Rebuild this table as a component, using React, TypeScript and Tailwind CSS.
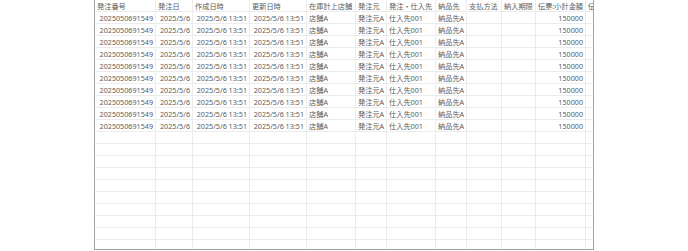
const columns = [
  { label: "発注番号", width: "w-[61px]", align: "right", value: "2025050691549" },
  { label: "発注日", width: "w-[37px]", align: "right", value: "2025/5/6" },
  { label: "作成日時", width: "w-[57px]", align: "right", value: "2025/5/6 13:51" },
  { label: "更新日時", width: "w-[57px]", align: "right", value: "2025/5/6 13:51" },
  { label: "在庫計上店舗", width: "w-[49px]", align: "left", value: "店舗A" },
  { label: "発注元", width: "w-[31px]", align: "left", value: "発注元A" },
  { label: "発注・仕入先", width: "w-[49px]", align: "left", value: "仕入先001" },
  { label: "納品先", width: "w-[31px]", align: "left", value: "納品先A" },
  { label: "支払方法", width: "w-[35px]", align: "left", value: "" },
  { label: "納入期限", width: "w-[34px]", align: "left", value: "" },
  { label: "伝票:小計金額", width: "w-[50px]", align: "right", value: "150000" },
  { label: "伝", width: "w-[60px]", align: "right", value: "" },
];

const DATA_ROWS = 10;
const EMPTY_ROWS = 10;

function Cell({
  width,
  align,
  children,
}: {
  width: string;
  align: string;
  children?: React.ReactNode;
}) {
  return (
    <div
      className={`${width} shrink-0 h-full border-r border-b border-[#ececec] px-[2px] overflow-hidden whitespace-nowrap leading-[12px] ${
        align === "right" ? "text-right" : "text-left"
      }`}
    >
      {children}
    </div>
  );
}

export default function App() {
  return (
    <div className="w-[688px] h-[251px] bg-white overflow-hidden">
      <div
        className="ml-[94px] w-[500px] h-[250px] border-l border-r border-b border-[#a3a3a3] overflow-hidden text-[7.2px] text-[#5c5c5c]"
        style={{ fontFamily: '"Noto Sans", "Noto Sans CJK JP", sans-serif' }}
      >
        {/* Header */}
        <div className="flex h-[12px]">
          {columns.map((c) => (
            <Cell key={c.label} width={c.width} align="left">
              {c.label}
            </Cell>
          ))}
        </div>

        {/* Rows */}
        {Array.from({ length: DATA_ROWS }).map((_, i) => (
          <div key={i} className="flex h-[12px]">
            {columns.map((c) => (
              <Cell key={c.label} width={c.width} align={c.align}>
                {c.value}
              </Cell>
            ))}
          </div>
        ))}

        {/* Empty grid */}
        {Array.from({ length: EMPTY_ROWS }).map((_, i) => (
          <div key={"e" + i} className="flex h-[12px]">
            {columns.map((c) => (
              <Cell key={c.label} width={c.width} align={c.align} />
            ))}
          </div>
        ))}
      </div>
    </div>
  );
}
